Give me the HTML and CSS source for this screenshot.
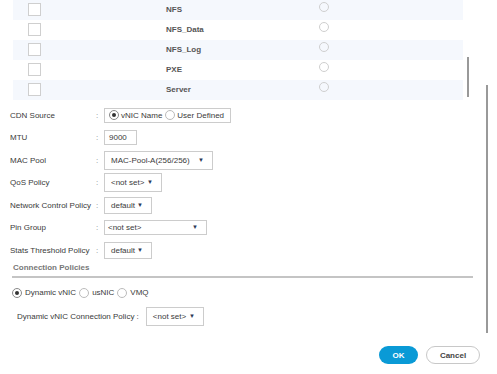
FILE: index.html
```html
<!DOCTYPE html>
<html lang="en">
<head>
    <meta charset="UTF-8">
    <meta name="viewport" content="width=device-width, initial-scale=1.0">
    <title>Create vNIC</title>
    <link rel="stylesheet" href="styles.css">
</head>
<body>
    <div class="dialog">
        <div class="vlan-table">
            <div class="vlan-row"><span class="check"></span><span class="vlan-name">NFS</span><span class="native"></span></div>
            <div class="vlan-row"><span class="check"></span><span class="vlan-name">NFS_Data</span><span class="native"></span></div>
            <div class="vlan-row"><span class="check"></span><span class="vlan-name">NFS_Log</span><span class="native"></span></div>
            <div class="vlan-row"><span class="check"></span><span class="vlan-name">PXE</span><span class="native"></span></div>
            <div class="vlan-row"><span class="check"></span><span class="vlan-name">Server</span><span class="native"></span></div>
            <div class="table-scroll"></div>
        </div>

        <div class="form">
            <div class="form-row">
                <label>CDN Source</label><span class="colon">:</span>
                <div class="box radio-box">
                    <span class="radio checked"></span><span class="opt">vNIC Name</span>
                    <span class="radio"></span><span class="opt">User Defined</span>
                </div>
            </div>
            <div class="form-row">
                <label>MTU</label><span class="colon">:</span>
                <div class="box text-box">9000</div>
            </div>
            <div class="form-row">
                <label>MAC Pool</label><span class="colon">:</span>
                <div class="box select mac">MAC-Pool-A(256/256)<span class="arrow">&#9660;</span></div>
            </div>
            <div class="form-row">
                <label>QoS Policy</label><span class="colon">:</span>
                <div class="box select qos">&lt;not set&gt;<span class="arrow">&#9660;</span></div>
            </div>
            <div class="form-row">
                <label>Network Control Policy</label><span class="colon">:</span>
                <div class="box select short">default<span class="arrow">&#9660;</span></div>
            </div>
            <div class="form-row">
                <label>Pin Group</label><span class="colon">:</span>
                <div class="box select pin">&lt;not set&gt;<span class="arrow">&#9660;</span></div>
            </div>
            <div class="form-row">
                <label>Stats Threshold Policy</label><span class="colon">:</span>
                <div class="box select short tall">default<span class="arrow">&#9660;</span></div>
            </div>
        </div>

        <div class="section-title">Connection Policies</div>

        <div class="conn-types">
            <span class="radio checked"></span><span class="opt">Dynamic vNIC</span>
            <span class="radio"></span><span class="opt">usNIC</span>
            <span class="radio"></span><span class="opt">VMQ</span>
        </div>

        <div class="conn-policy">
            <label>Dynamic vNIC Connection Policy :</label>
            <div class="box select qos">&lt;not set&gt;<span class="arrow">&#9660;</span></div>
        </div>

        <div class="actions">
            <button class="btn ok">OK</button>
            <button class="btn cancel">Cancel</button>
        </div>

        <div class="page-scroll"></div>
    </div>
</body>
</html>
```

FILE: styles.css
```css
body {
    margin: 0;
    font-family: "Liberation Sans", Arial, sans-serif;
    font-size: 8px;
    color: #3a3a3a;
    background: white;
}
.dialog {
    position: relative;
    width: 497px;
    height: 374px;
}
.vlan-table {
    position: relative;
    margin-left: 13px;
    width: 450px;
}
.vlan-row {
    display: flex;
    align-items: flex-start;
    height: 20px;
}
.vlan-row:nth-child(odd) {
    background: #f5f8fd;
}
.check {
    width: 11px;
    height: 11px;
    margin: 3px 0 0 15px;
    border: 1px solid #cfcfcf;
    background: white;
}
.vlan-name {
    width: 153px;
    margin-left: 125px;
    line-height: 19px;
    font-weight: bold;
    color: #555;
}
.native {
    width: 8px;
    height: 8px;
    margin-top: 2px;
    border: 1px solid #cfcfcf;
    border-radius: 50%;
}
.table-scroll {
    position: absolute;
    left: 454px;
    top: 57px;
    width: 2px;
    height: 40px;
    background: #999;
}
.page-scroll {
    position: absolute;
    left: 486px;
    top: 85px;
    width: 2px;
    height: 248px;
    background: #999;
}
.form {
    padding: 4px 0 0 10px;
}
.form-row {
    display: flex;
    align-items: center;
    height: 22.5px;
}
.form-row label {
    width: 86px;
}
.colon {
    width: 8px;
    color: #888;
}
.box {
    display: flex;
    align-items: center;
    box-sizing: border-box;
    border: 1px solid #ccc;
    background: white;
}
.radio-box {
    width: 127px;
    height: 15px;
    padding-left: 4px;
}
.radio {
    position: relative;
    width: 8px;
    height: 8px;
    border: 1px solid #bbb;
    border-radius: 50%;
    margin-right: 2px;
}
.radio.checked {
    border-color: #888;
}
.radio.checked::after {
    content: "";
    position: absolute;
    left: 2px;
    top: 2px;
    width: 4px;
    height: 4px;
    border-radius: 50%;
    background: #333;
}
.opt {
    margin-right: 3px;
}
.text-box {
    width: 33px;
    height: 15px;
    padding-left: 4px;
}
.select {
    position: relative;
    height: 19px;
    padding-left: 6px;
}
.arrow {
    position: absolute;
    right: 8px;
    top: 5px;
    font-size: 6px;
    color: #2a3a55;
}
.mac {
    width: 109px;
}
.qos {
    width: 58px;
}
.short {
    width: 48px;
    height: 17px;
}
.pin {
    width: 103px;
    height: 15px;
    padding-left: 3px;
}
.pin .arrow {
    top: 3px;
}
.short .arrow {
    top: 4px;
}
.section-title {
    margin: 0 24px 0 12px;
    padding: 0 0 3px 1px;
    line-height: 11px;
    font-weight: bold;
    color: #777;
    border-bottom: 2px solid #c4c4c4;
}
.conn-types {
    display: flex;
    align-items: center;
    height: 10px;
    margin: 10px 0 0 12px;
}
.conn-types .radio {
    margin-right: 3px;
}
.conn-policy {
    display: flex;
    align-items: center;
    gap: 7px;
    margin: 9.5px 0 0 17px;
    height: 19px;
}
.actions {
    display: flex;
    justify-content: flex-end;
    gap: 8px;
    margin: 20px 17px 0 0;
}
.btn {
    height: 18px;
    border-radius: 9px;
    font-family: "Liberation Sans", Arial, sans-serif;
    font-size: 8px;
    font-weight: bold;
    cursor: pointer;
    padding: 0;
}
.ok {
    width: 39px;
    border: none;
    background: #0a9ad6;
    color: white;
}
.cancel {
    width: 54px;
    border: 1px solid #c8c8c8;
    background: white;
    color: #444;
}
```
